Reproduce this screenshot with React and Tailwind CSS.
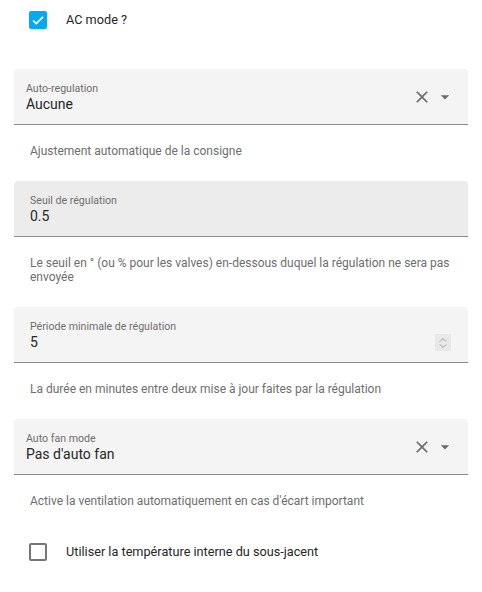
import React from "react";

const font = { fontFamily: "Roboto, 'Noto Sans', sans-serif" };

const CheckRow = ({ checked, label }) => (
  <div className="flex items-center h-[40px] pl-[29px]">
    {checked ? (
      <div className="w-[18px] h-[18px] rounded-[2px] bg-[#03a9f4] flex items-center justify-center">
        <svg width="14" height="14" viewBox="0 0 24 24">
          <path d="M3.5 12.5l5.5 5.5L20.5 6.5" fill="none" stroke="white" strokeWidth="3" />
        </svg>
      </div>
    ) : (
      <div className="w-[18px] h-[18px] rounded-[2px] border-2 border-[#757575]" />
    )}
    <span className="ml-[19px] text-[12.7px] text-[#262626]">{label}</span>
  </div>
);

const SelectIcons = () => (
  <div className="flex items-center gap-[3px] mr-[13px]">
    <svg width="20" height="20" viewBox="0 0 24 24" fill="#6b6b6b">
      <path d="M19,6.41L17.59,5L12,10.59L6.41,5L5,6.41L10.59,12L5,17.59L6.41,19L12,13.41L17.59,19L19,17.59L13.41,12L19,6.41Z" />
    </svg>
    <svg width="20" height="20" viewBox="0 0 24 24" fill="#6b6b6b">
      <path d="M7,10L12,15L17,10H7Z" />
    </svg>
  </div>
);

const Spinner = () => (
  <div className="w-[16px] h-[17px] bg-[#e8e8e8] flex flex-col items-center justify-center mr-[17px] mt-[16px]">
    <svg width="8" height="6" viewBox="0 0 8 6">
      <path d="M1 4.5L4 1.5L7 4.5" fill="none" stroke="#9e9e9e" strokeWidth="1" />
    </svg>
    <svg width="8" height="6" viewBox="0 0 8 6">
      <path d="M1 1.5L4 4.5L7 1.5" fill="none" stroke="#9e9e9e" strokeWidth="1" />
    </svg>
  </div>
);

const Field = ({ label, value, helper, select, spinner, hover }) => (
  <div className="px-[14px]">
    <div
      className={`h-[56px] rounded-t-[4px] border-b border-[#8c8c8c] flex items-center ${
        hover ? "bg-[#ececec]" : "bg-[#f4f4f4]"
      }`}
    >
      <div className={`flex-1 self-stretch flex flex-col ${select ? "pl-[12px]" : "pl-[16px]"} pt-[14px]`}>
        <span className="text-[10.6px] leading-[12px] text-[#6e6e6e]">{label}</span>
        <span className="text-[14px] leading-[16px] text-[#262626] mt-[1px]">{value}</span>
      </div>
      {select && <SelectIcons />}
      {spinner && <Spinner />}
    </div>
    <div className="px-[16px] pt-[19px] pb-[23px] text-[12px] leading-[14px] text-[#6e6e6e]">
      {helper}
    </div>
  </div>
);

export default function App() {
  return (
    <div className="w-[482px] h-[592px] bg-white" style={font}>
      <CheckRow checked label="AC mode ?" />
      <div className="mt-[29px]">
        <Field
          select
          label="Auto-regulation"
          value="Aucune"
          helper="Ajustement automatique de la consigne"
        />
        <Field
          hover
          label="Seuil de régulation"
          value="0.5"
          helper="Le seuil en ° (ou % pour les valves) en-dessous duquel la régulation ne sera pas envoyée"
        />
        <Field
          spinner
          label="Période minimale de régulation"
          value="5"
          helper="La durée en minutes entre deux mise à jour faites par la régulation"
        />
        <Field
          select
          label="Auto fan mode"
          value="Pas d'auto fan"
          helper="Active la ventilation automatiquement en cas d'écart important"
        />
      </div>
      <div className="mt-[1px]">
        <CheckRow label="Utiliser la température interne du sous-jacent" />
      </div>
    </div>
  );
}
